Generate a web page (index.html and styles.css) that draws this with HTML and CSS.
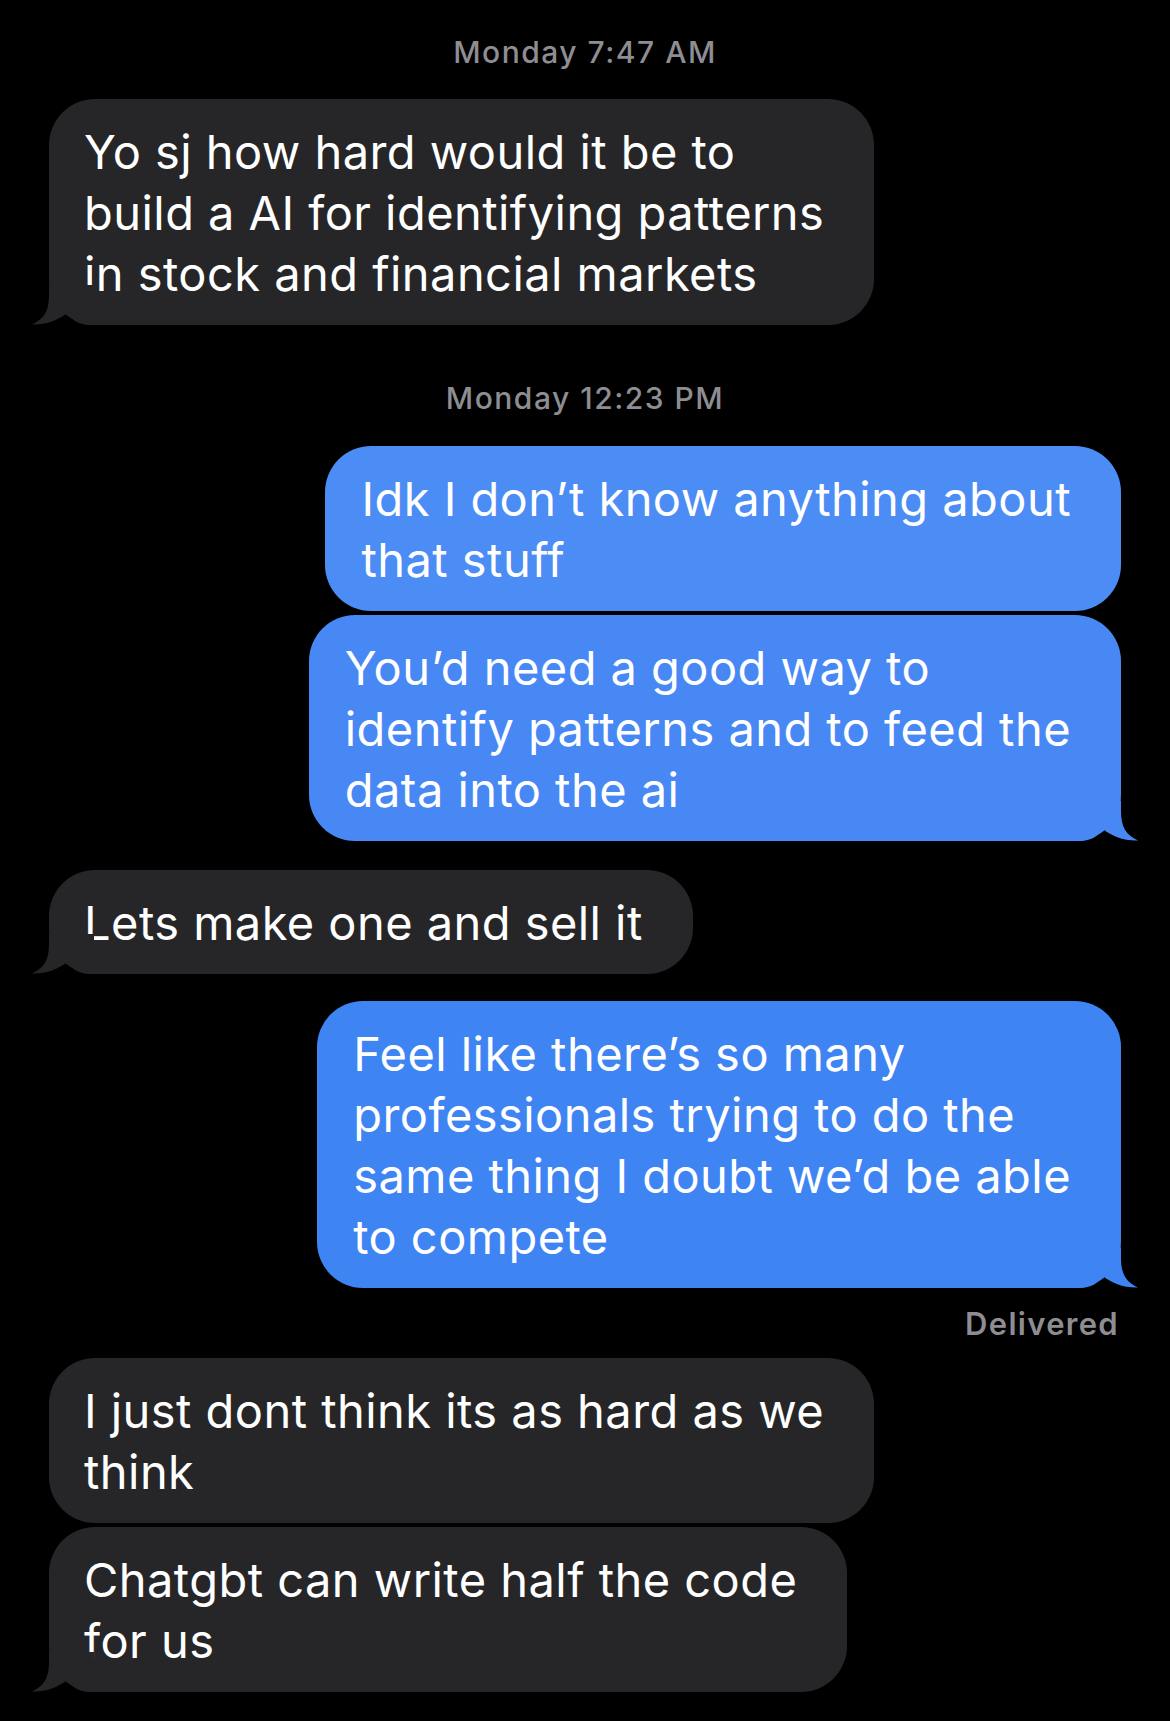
FILE: index.html
```html
<!DOCTYPE html>
<html lang="en">
<head>
<meta charset="utf-8">
<title>Messages</title>
<link rel="stylesheet" href="styles.css">
</head>
<body>
<main class="thread">
  <div class="stamp stamp-first">Monday 7:47 AM</div>

  <div class="msg in tail gap-after-stamp">
    Yo sj how hard would it be to<br>build a AI for identifying patterns<br>in stock and financial markets
    <svg class="tail-svg" viewBox="0 0 62 40" aria-hidden="true"><path d="M17 0 L17 10 C17 26 12 34 0 39.5 C14 40 27 35 35 28 C40 35 47 40 58 40 L62 40 L62 0 Z"/></svg>
  </div>

  <div class="stamp stamp-second">Monday 12:23 PM</div>

  <div class="msg out blue-1 gap-after-stamp">
    Idk I don’t know anything about<br>that stuff
  </div>
  <div class="msg out blue-2 tail gap-s">
    You’d need a good way to<br>identify patterns and to feed the<br>data into the ai
    <svg class="tail-svg" viewBox="0 0 62 40" aria-hidden="true"><path d="M17 0 L17 10 C17 26 12 34 0 39.5 C14 40 27 35 35 28 C40 35 47 40 58 40 L62 40 L62 0 Z"/></svg>
  </div>

  <div class="msg in tail gap-l">
    Lets make one and sell it
    <svg class="tail-svg" viewBox="0 0 62 40" aria-hidden="true"><path d="M17 0 L17 10 C17 26 12 34 0 39.5 C14 40 27 35 35 28 C40 35 47 40 58 40 L62 40 L62 0 Z"/></svg>
  </div>

  <div class="msg out blue-3 tail gap-l2">
    Feel like there’s so many<br>professionals trying to do the<br>same thing I doubt we’d be able<br>to compete
    <svg class="tail-svg" viewBox="0 0 62 40" aria-hidden="true"><path d="M17 0 L17 10 C17 26 12 34 0 39.5 C14 40 27 35 35 28 C40 35 47 40 58 40 L62 40 L62 0 Z"/></svg>
  </div>
  <div class="status">Delivered</div>

  <div class="msg in gap-after-status">
    I just dont think its as hard as we<br>think
  </div>
  <div class="msg in tail gap-s">
    Chatgbt can write half the code<br>for us
    <svg class="tail-svg" viewBox="0 0 62 40" aria-hidden="true"><path d="M17 0 L17 10 C17 26 12 34 0 39.5 C14 40 27 35 35 28 C40 35 47 40 58 40 L62 40 L62 0 Z"/></svg>
  </div>
</main>
</body>
</html>
```

FILE: styles.css
```css
html, body {
  margin: 0;
  padding: 0;
  background: #000;
}

body {
  width: 1170px;
  min-height: 1721px;
  font-family: "Inter", "Roboto", "Liberation Sans", sans-serif;
  -webkit-font-smoothing: antialiased;
}

.thread {
  display: flex;
  flex-direction: column;
  padding: 34px 49px 0 49px;
}

.stamp {
  align-self: center;
  font-size: 30px;
  line-height: 36px;
  font-weight: 500;
  color: #8d8d92;
  letter-spacing: 1.5px;
}

.stamp-second {
  margin-top: 55px;
}

.msg {
  position: relative;
  box-sizing: border-box;
  padding: 21.5px 50px 21.5px 35px;
  border-radius: 46px;
  font-size: 47px;
  line-height: 61px;
  font-weight: 400;
  color: #fff;
  letter-spacing: 0.45px;
  white-space: nowrap;
}

.msg.in {
  align-self: flex-start;
  background: #262628;
  color: #fff;
  fill: #262628;
}

.msg.out {
  align-self: flex-end;
  padding-left: 36px;
}

.blue-1 { background: #4b8cf5; fill: #4b8cf5; }
.blue-2 { background: #4888f4; fill: #4888f4; }
.blue-3 { background: #3f84f3; fill: #3f84f3; }

.tail-svg {
  position: absolute;
  bottom: 0;
  width: 62px;
  height: 40px;
  display: block;
}

.msg.in .tail-svg {
  left: -17px;
}

.msg.out .tail-svg {
  right: -17px;
  transform: scaleX(-1);
}

.gap-after-stamp { margin-top: 29px; }
.stamp-second + .gap-after-stamp { margin-top: 30px; }
.gap-s { margin-top: 4px; }
.gap-l { margin-top: 29px; }
.gap-l2 { margin-top: 27px; }

.status {
  align-self: flex-end;
  margin-top: 18px;
  padding-right: 2px;
  font-size: 31px;
  line-height: 36px;
  font-weight: 600;
  color: #8d8d92;
  letter-spacing: 1.3px;
}

.gap-after-status { margin-top: 16px; }
```
